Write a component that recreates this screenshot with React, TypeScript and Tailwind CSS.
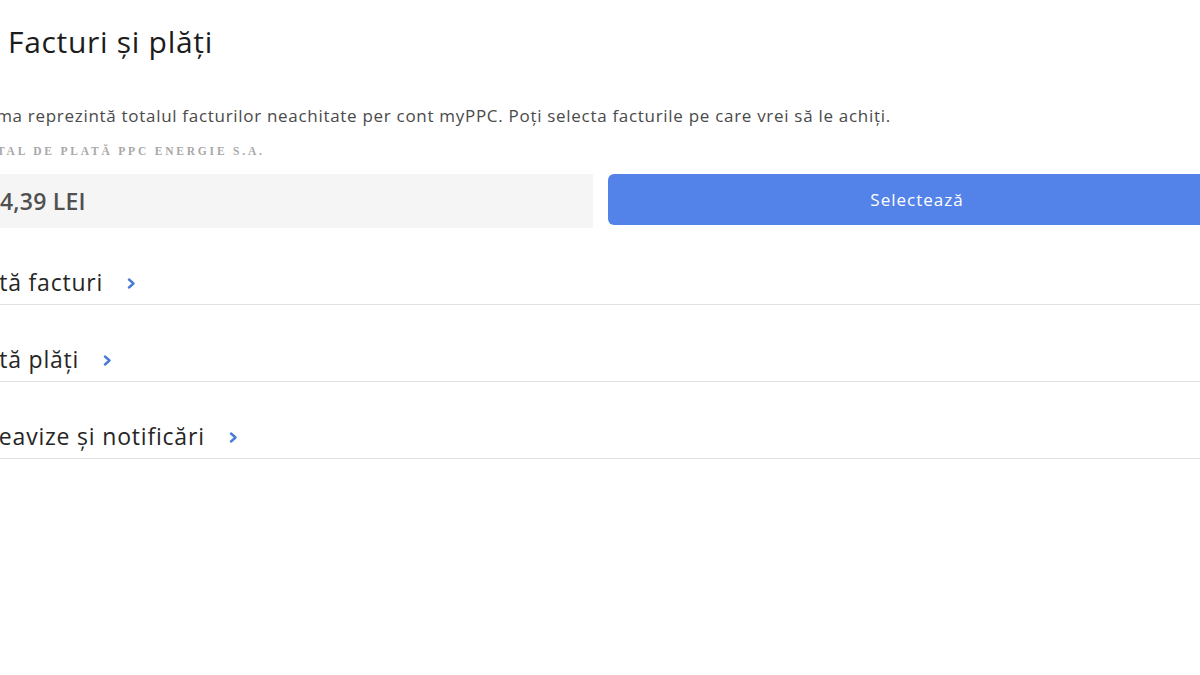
import React from "react";

function Chevron() {
  return (
    <svg width="9" height="11" viewBox="0 0 9 11" className="shrink-0 mt-[3px]">
      <path d="M2 1.5 L6.5 5.5 L2 9.5" fill="none" stroke="#4a7bd6" strokeWidth="2.4" strokeLinecap="round" strokeLinejoin="round" />
    </svg>
  );
}

function Row({ label, shift }: { label: string; shift: string }) {
  return (
    <div className="flex items-center border-b border-[#e2e2e2] h-[77px] pt-[31px]">
      <span className={`text-[23px] leading-[30px] tracking-[0.8px] text-[#262626] mr-[24px] ${shift}`}>{label}</span>
      <Chevron />
    </div>
  );
}

export default function App() {
  return (
    <div className="w-[1200px] h-[675px] overflow-hidden bg-white font-['Open_Sans',sans-serif]">
      <div className="ml-[-25px] w-[1251px]">
        <h1 className="pl-[33px] pt-[22px] text-[30px] leading-[40px] tracking-[0.7px] text-[#1c1c1c] font-normal">Facturi și plăți</h1>
        <p className="mt-[43px] text-[17px] leading-[22px] tracking-[0.7px] text-[#4a4a4a]">
          Suma reprezintă totalul facturilor neachitate per cont myPPC. Poți selecta facturile pe care vrei să le achiți.
        </p>
        <div className="mt-[17px] font-['Liberation_Serif',serif] font-bold text-[11.5px] leading-[14px] tracking-[2.8px] text-[#a8a8a8]">
          TOTAL DE PLATĂ PPC ENERGIE S.A.
        </div>
        <div className="mt-[16px] grid grid-cols-2 gap-[15px]">
          <div className="h-[54px] bg-[#f5f5f5] flex items-center pl-[25px] text-[23px] font-semibold tracking-[0.2px] text-[#505050]">
            4,39 LEI
          </div>
          <div>
            <button className="w-full h-[51px] rounded-[6px] bg-[#5383e8] text-white text-[17px] tracking-[1px]">Selectează</button>
          </div>
        </div>
        <div>
          <Row label="Listă facturi" shift="ml-[-7px]" />
          <Row label="Listă plăți" shift="ml-[-7px]" />
          <Row label="Preavize și notificări" shift="ml-[-1px]" />
        </div>
      </div>
    </div>
  );
}
